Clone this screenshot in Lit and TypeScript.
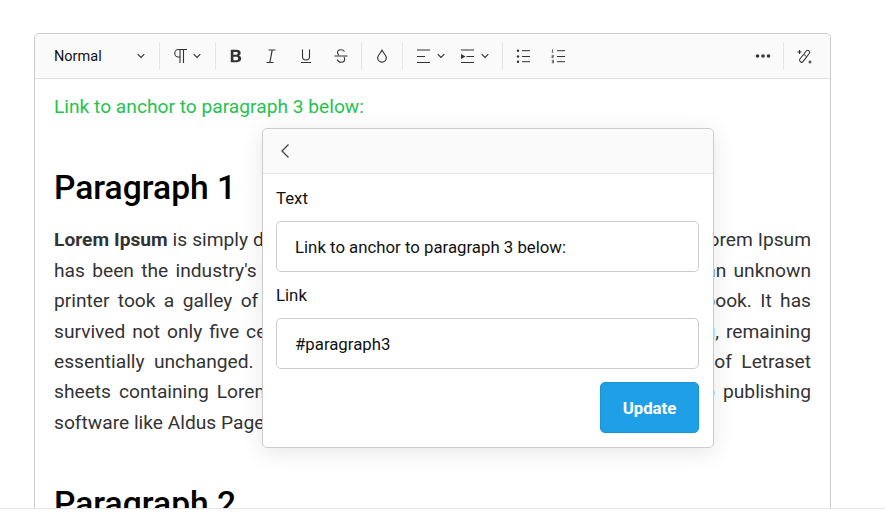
import { LitElement, html, css, svg } from "lit";
import { customElement } from "lit/decorators.js";

const chev = html`<svg class="chev" width="8" height="6" viewBox="0 0 8 6"><path d="M.7 1.200L4 4.500l3.300-3.300" fill="none" stroke="#333" stroke-width="1.200"/></svg>`;
const ico = (w: number, body: unknown) => html`<svg width=${w} height="20" viewBox="0 0 ${w} 20" fill="none" stroke="#333" stroke-width="1.100">${body}</svg>`;

@customElement("app-root")
export class AppRoot extends LitElement {
  static styles = css`
    :host { display: block; height: 523px; background: #fff; font-family: Roboto, "Liberation Sans", sans-serif; }
    .stage { box-sizing: border-box; height: 509px; overflow: hidden; border-bottom: 1px solid #e5e5e5; padding: 33px 0 0 34px; }
    .editor { position: relative; width: 797px; height: 600px; box-sizing: border-box; border: 1px solid #ccc; border-radius: 5px; }
    .toolbar { display: flex; align-items: center; gap: 6px; height: 44px; background: #fafafa; border-bottom: 1px solid #e2e2e2; border-radius: 5px 5px 0 0; padding-right: 12px; }
    .select { width: 118.5px; box-sizing: border-box; padding: 0 9px 0 19px; display: flex; justify-content: space-between; align-items: center; font-size: 14.5px; color: #111; flex: none; }
    .sep { width: 1px; height: 28px; background: #e5e5e5; flex: none; margin: 0 -0.5px; }
    .btn { width: 29px; height: 28px; display: flex; align-items: center; justify-content: center; flex: none; }
    .drop { justify-content: flex-start; box-sizing: border-box; }
    .para-btn { width: 44px; padding-left: 7.5px; gap: 6px; }
    .align-btn { width: 43px; padding-left: 8.5px; gap: 7px; }
    .indent-btn { width: 39px; padding-left: 3.5px; gap: 7px; }
    .spacer { flex: 1; }
    .content { padding: 13px 19px 0; color: #333; font-size: 19.2px; line-height: 30.4px; }
    .green { margin: 0; color: #26c24f; }
    h1 { font-size: 33.6px; font-weight: 500; line-height: 40px; color: #000; margin: 46px 0 17px; }
    .para { margin: 0; text-align: justify; }
    .para b { font-weight: 700; }
    .para a { color: #1e9fe6; text-decoration: none; }
    .pop { position: absolute; left: 227px; top: 94px; width: 452px; height: 320px; box-sizing: border-box; background: #fff; border: 1px solid #ccc; border-radius: 5px; box-shadow: 0 4px 22px rgba(0,0,0,.1); display: flex; flex-direction: column; }
    .pop-head { height: 44px; flex: none; background: #fafafa; border-bottom: 1px solid #e5e5e5; border-radius: 5px 5px 0 0; display: flex; align-items: center; padding-left: 16px; }
    .pop-body { padding: 12px 14px 0 13px; display: flex; flex-direction: column; }
    label { font-size: 16.8px; line-height: 24px; color: #111; }
    .input { height: 51px; box-sizing: border-box; border: 1px solid #ccc; border-radius: 5px; margin: 11px 0; padding: 0 18px; display: flex; align-items: center; font-size: 16.8px; color: #111; }
    .row { display: flex; justify-content: flex-end; margin-top: 2px; }
    .update { width: 99px; height: 51px; box-sizing: border-box; background: #1e9fe6; border: 1px solid #1a94d8; border-radius: 5px; color: #fff; font: 700 16.8px Roboto, "Liberation Sans", sans-serif; display: flex; align-items: center; justify-content: center; }
  `;

  render() {
    return html`
      <div class="stage">
        <div class="editor">
          <div class="toolbar">
            <div class="select"><span>Normal</span>${chev}</div>
            <div class="sep"></div>
            <div class="btn drop para-btn">
              ${ico(14, svg`<path d="M14 3.500H5.500a3.500 3.500 0 0 0 0 7.500H7M7 3.500V17M10.500 3.500V17"/>`)}${chev}
            </div>
            <div class="sep"></div>
            <div class="btn"><svg width="20" height="20" viewBox="0 0 20 20"><path d="M4.800 3.700h5.700c2.700 0 4.100 1.200 4.100 3.200 0 1.300-.7 2.300-1.800 2.700 1.400.4 2.400 1.500 2.400 3 0 2.300-1.700 3.600-4.400 3.600h-6zM7.400 5.900v2.800h2.700c1.100 0 1.700-.5 1.700-1.400s-.6-1.400-1.700-1.400zM7.400 10.800v3.500h2.900c1.200 0 1.900-.6 1.900-1.800s-.7-1.700-1.900-1.700z" fill="#333" fill-rule="evenodd"/></svg></div>
            <div class="btn">${ico(20, svg`<path d="M7.500 4h7M5.500 16.500h7M11.200 4L8.800 16.500" stroke-width="1.200"/>`)}</div>
            <div class="btn">${ico(20, svg`<path d="M6.500 3.500v7a3.500 3.500 0 0 0 7 0v-7M5 16.500h10"/>`)}</div>
            <div class="btn">${ico(20, svg`<path d="M3.500 10h13M13.500 5.500C12.800 4.300 11.600 3.800 10 3.800c-2 0-3.500 1-3.500 2.800 0 1 .5 1.800 1.300 2.400M6.200 13.500c.6 1.800 2 2.700 3.800 2.700 2.100 0 3.700-1.100 3.700-3 0-.9-.3-1.600-.8-2.200"/>`)}</div>
            <div class="sep"></div>
            <div class="btn">${ico(20, svg`<path d="M10 3.500C8.400 6.700 5.200 9.200 5.200 12a4.800 4.800 0 0 0 9.600 0C14.800 9.200 11.600 6.700 10 3.500z" transform="translate(1 1) scale(.9)" stroke-width="1.300"/>`)}</div>
            <div class="sep"></div>
            <div class="btn drop align-btn">
              ${ico(13, svg`<path d="M0 4h13M0 10.500h8M0 16.500h13"/>`)}${chev}
            </div>
            <div class="btn drop indent-btn">
              ${ico(13, svg`<path d="M0 4h13M5.500 10.500h7.500M0 16.500h13" stroke-width="1.100"/><path d="M0 8l4.500 2.500L0 13z" fill="#333" stroke="none"/>`)}${chev}
            </div>
            <div class="sep"></div>
            <div class="btn">${ico(20, svg`<path d="M9 4.700h8M9 10.500h8M9 15.700h8" stroke-width="1"/><circle cx="5" cy="4.700" r="1.200" fill="#333" stroke="none"/><circle cx="5" cy="10.500" r="1.200" fill="#333" stroke="none"/><circle cx="5" cy="15.700" r="1.200" fill="#333" stroke="none"/>`)}</div>
            <div class="btn">${ico(20, svg`<path d="M9 4.700h8M9 10.500h8M9 15.700h8" stroke-width="1"/><path d="M4.500 3.200v3M3.700 6.200h1.700M3.700 9.300h1.800v1.200H3.900v1.200h1.700M3.700 14.300h1.800v2.600H3.700M4 15.600h1.500" stroke-width=".7"/>`)}</div>
            <div class="spacer"></div>
            <div class="btn"><svg width="16" height="6" viewBox="0 0 16 6"><circle cx="2.500" cy="3" r="1.800" fill="#333"/><circle cx="8" cy="3" r="1.800" fill="#333"/><circle cx="13.500" cy="3" r="1.800" fill="#333"/></svg></div>
            <div class="sep"></div>
            <div class="btn">${ico(20, svg`<path d="M7.500 16.500l-1.500-1.300a1.600 1.600 0 0 1-.1-2.200l6.400-8a1.900 1.900 0 0 1 2.900 2.500l-6.200 8.100a1.700 1.700 0 0 1-1.500.900z"/><path d="M10 8.500l2.800 2.400" stroke-width="1"/><path d="M5.500 4v4M3.500 6h4M16 14.500v3M14.500 16h3" stroke-width="1.200"/>`)}</div>
          </div>
          <div class="content">
            <p class="green">Link to anchor to paragraph 3 below:</p>
            <h1>Paragraph 1</h1>
            <p class="para"><b>Lorem Ipsum</b> is simply dummy text of the printing and typesetting industry. Lorem Ipsum has been the industry's standard dummy text ever since the 1500s, when an unknown printer took a galley of type and scrambled it to make a type specimen book. It has survived not only five centuries, but also the leap into <a>electronic typesetting</a>, remaining essentially unchanged. It was popularised in the 1960s with the release of Letraset sheets containing Lorem Ipsum passages, and more recently with <a>desktop</a> publishing software like Aldus PageMaker including versions of Lorem Ipsum.</p>
            <h1>Paragraph 2</h1>
          </div>
          <div class="pop">
            <div class="pop-head"><svg width="12" height="18" viewBox="0 0 12 18"><path d="M9.500 2.500L3 9l6.500 6.500" fill="none" stroke="#444" stroke-width="1.300"/></svg></div>
            <div class="pop-body">
              <label>Text</label>
              <div class="input">Link to anchor to paragraph 3 below:</div>
              <label>Link</label>
              <div class="input">#paragraph3</div>
              <div class="row"><div class="update">Update</div></div>
            </div>
          </div>
        </div>
      </div>
    `;
  }
}
